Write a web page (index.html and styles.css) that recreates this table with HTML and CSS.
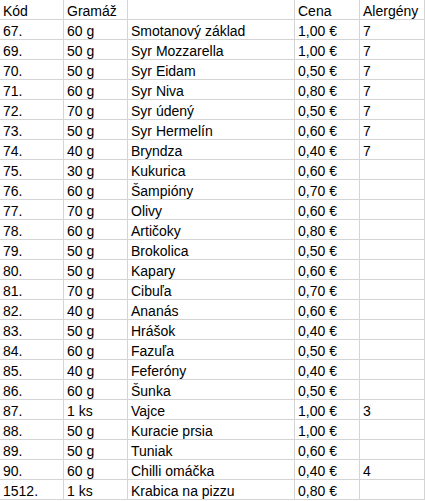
FILE: index.html
```html
<!DOCTYPE html>
<html lang="sk">
<head>
<meta charset="utf-8">
<link rel="stylesheet" href="styles.css">
</head>
<body>
<div class="sheet">
  <div class="c">Kód</div><div class="c">Gramáž</div><div class="c"></div><div class="c">Cena</div><div class="c">Alergény</div>
  <div class="c">67.</div><div class="c">60 g</div><div class="c">Smotanový základ</div><div class="c">1,00 €</div><div class="c">7</div>
  <div class="c">69.</div><div class="c">50 g</div><div class="c">Syr Mozzarella</div><div class="c">1,00 €</div><div class="c">7</div>
  <div class="c">70.</div><div class="c">50 g</div><div class="c">Syr Eidam</div><div class="c">0,50 €</div><div class="c">7</div>
  <div class="c">71.</div><div class="c">60 g</div><div class="c">Syr Niva</div><div class="c">0,80 €</div><div class="c">7</div>
  <div class="c">72.</div><div class="c">70 g</div><div class="c">Syr údený</div><div class="c">0,50 €</div><div class="c">7</div>
  <div class="c">73.</div><div class="c">50 g</div><div class="c">Syr Hermelín</div><div class="c">0,60 €</div><div class="c">7</div>
  <div class="c">74.</div><div class="c">40 g</div><div class="c">Bryndza</div><div class="c">0,40 €</div><div class="c">7</div>
  <div class="c">75.</div><div class="c">30 g</div><div class="c">Kukurica</div><div class="c">0,60 €</div><div class="c"></div>
  <div class="c">76.</div><div class="c">60 g</div><div class="c">Šampióny</div><div class="c">0,70 €</div><div class="c"></div>
  <div class="c">77.</div><div class="c">70 g</div><div class="c">Olivy</div><div class="c">0,60 €</div><div class="c"></div>
  <div class="c">78.</div><div class="c">60 g</div><div class="c">Artičoky</div><div class="c">0,80 €</div><div class="c"></div>
  <div class="c">79.</div><div class="c">50 g</div><div class="c">Brokolica</div><div class="c">0,50 €</div><div class="c"></div>
  <div class="c">80.</div><div class="c">50 g</div><div class="c">Kapary</div><div class="c">0,60 €</div><div class="c"></div>
  <div class="c">81.</div><div class="c">70 g</div><div class="c">Cibuľa</div><div class="c">0,70 €</div><div class="c"></div>
  <div class="c">82.</div><div class="c">40 g</div><div class="c">Ananás</div><div class="c">0,60 €</div><div class="c"></div>
  <div class="c">83.</div><div class="c">50 g</div><div class="c">Hrášok</div><div class="c">0,40 €</div><div class="c"></div>
  <div class="c">84.</div><div class="c">60 g</div><div class="c">Fazuľa</div><div class="c">0,50 €</div><div class="c"></div>
  <div class="c">85.</div><div class="c">40 g</div><div class="c">Feferóny</div><div class="c">0,40 €</div><div class="c"></div>
  <div class="c">86.</div><div class="c">60 g</div><div class="c">Šunka</div><div class="c">0,50 €</div><div class="c"></div>
  <div class="c">87.</div><div class="c">1 ks</div><div class="c">Vajce</div><div class="c">1,00 €</div><div class="c">3</div>
  <div class="c">88.</div><div class="c">50 g</div><div class="c">Kuracie prsia</div><div class="c">1,00 €</div><div class="c"></div>
  <div class="c">89.</div><div class="c">50 g</div><div class="c">Tuniak</div><div class="c">0,60 €</div><div class="c"></div>
  <div class="c">90.</div><div class="c">60 g</div><div class="c">Chilli omáčka</div><div class="c">0,40 €</div><div class="c">4</div>
  <div class="c">1512.</div><div class="c">1 ks</div><div class="c">Krabica na pizzu</div><div class="c">0,80 €</div><div class="c"></div>
</div>
</body>
</html>
```
FILE: styles.css
```css
html, body {
  margin: 0;
  padding: 0;
  background: #ffffff;
}
.sheet {
  display: grid;
  grid-template-columns: 64px 64px 167px 65px 65px;
  grid-auto-rows: 20px;
  width: 425px;
  font-family: "Liberation Sans", Arial, sans-serif;
  font-size: 14px;
  color: #000000;
}
.c {
  box-sizing: border-box;
  border-right: 1px solid #d4d4d4;
  border-bottom: 1px solid #d4d4d4;
  padding: 2px 0 0 3px;
  line-height: 18px;
  white-space: nowrap;
  overflow: hidden;
}
```
